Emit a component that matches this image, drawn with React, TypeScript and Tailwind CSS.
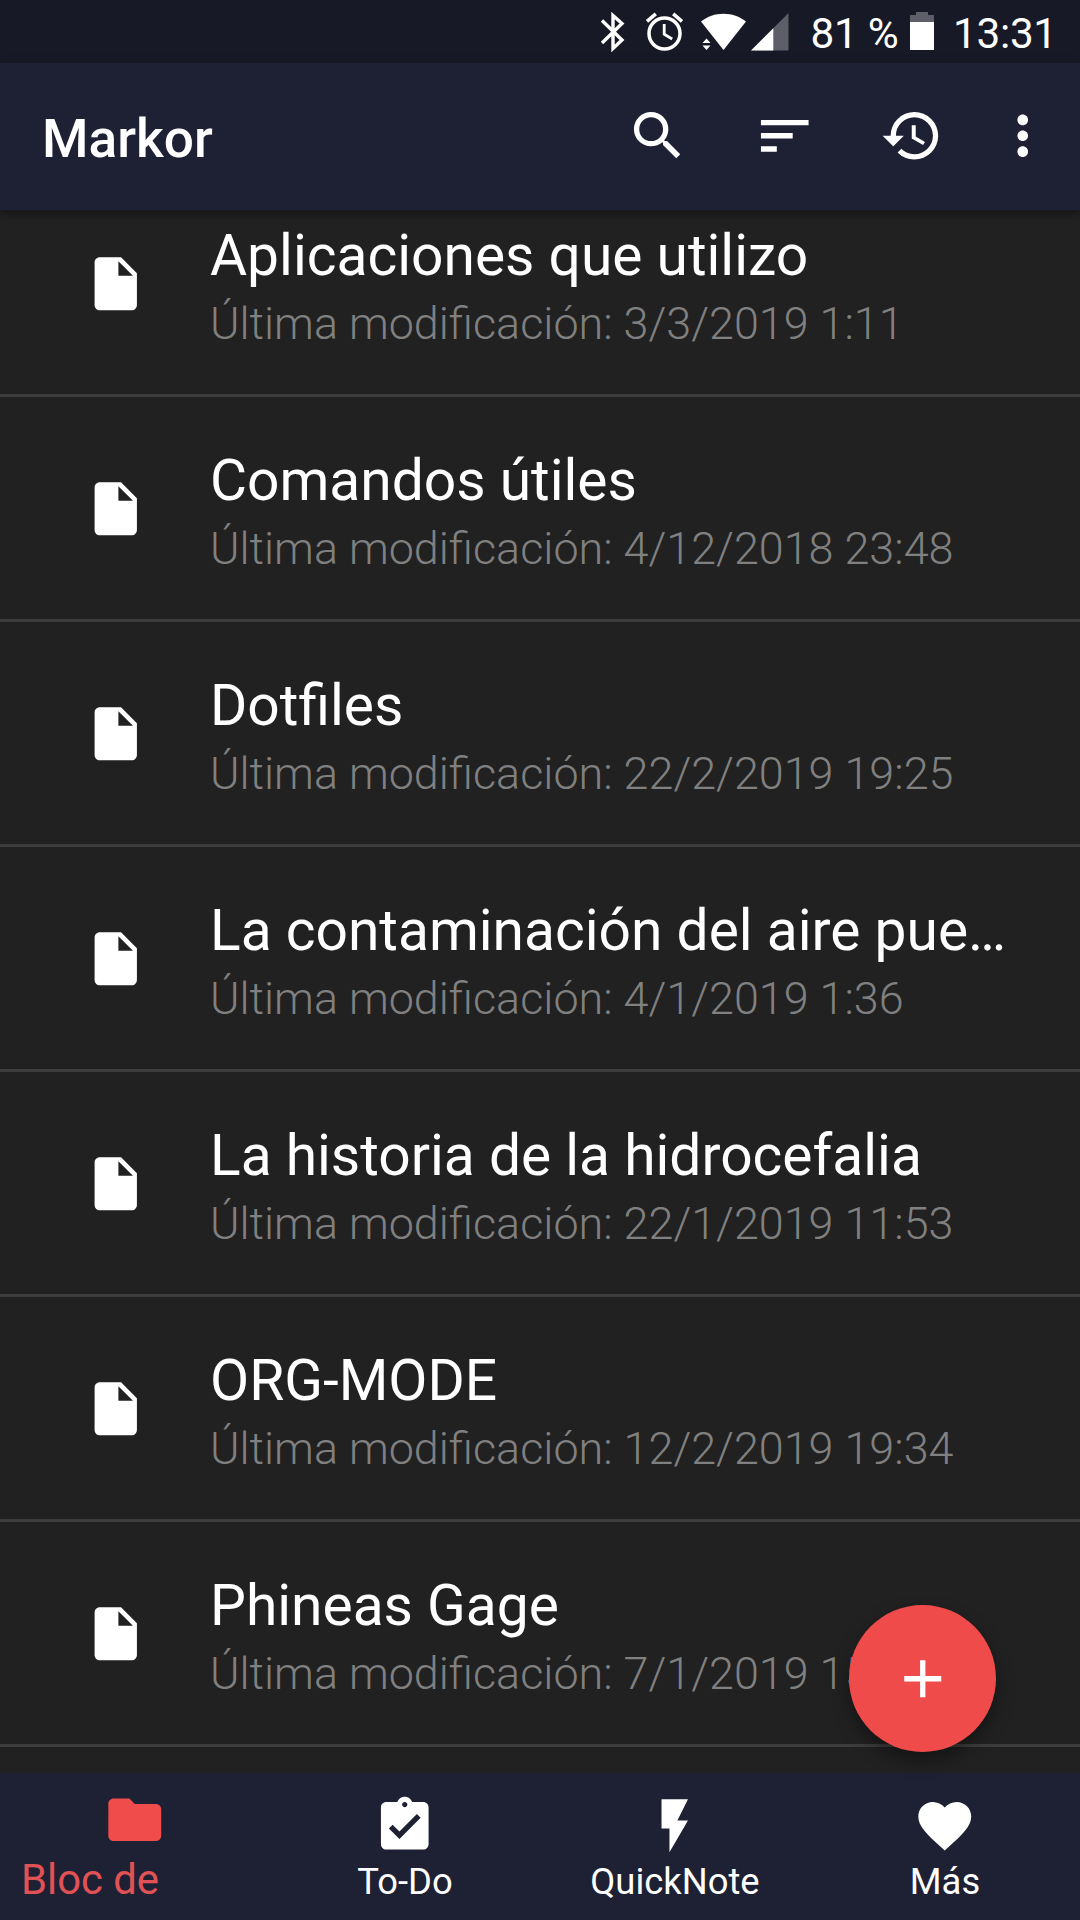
import React from "react";
import {
  MdAdd,
  MdAssignmentTurnedIn,
  MdFavorite,
  MdFlashOn,
  MdFolder,
  MdHistory,
  MdInsertDriveFile,
  MdMoreVert,
  MdSearch,
  MdSort,
} from "react-icons/md";
import clsx from "clsx";

const notes = [
  { title: "Aplicaciones que utilizo", modified: "3/3/2019 1:11" },
  { title: "Comandos útiles", modified: "4/12/2018 23:48" },
  { title: "Dotfiles", modified: "22/2/2019 19:25" },
  { title: "La contaminación del aire pue…", modified: "4/1/2019 1:36" },
  { title: "La historia de la hidrocefalia", modified: "22/1/2019 11:53" },
  { title: "ORG-MODE", modified: "12/2/2019 19:34" },
  { title: "Phineas Gage", modified: "7/1/2019 15:52" },
];

const tabs = [
  { label: "Bloc de", icon: MdFolder, active: true },
  { label: "To-Do", icon: MdAssignmentTurnedIn, active: false },
  { label: "QuickNote", icon: MdFlashOn, active: false },
  { label: "Más", icon: MdFavorite, active: false },
];

const StatusBar = () => (
  <div className="flex h-[63px] shrink-0 items-start bg-[#171926] pl-[600px]">
    {/* Bluetooth */}
    <svg className="mt-3 h-10 w-[25px] shrink-0" viewBox="0 0 25 40" fill="none">
      <path
        d="M2 8.500L22 28L13 36.500V3.500L22 11.500L2 31"
        stroke="#fff"
        strokeWidth="3.400"
      />
    </svg>
    {/* Alarm */}
    <svg className="mt-3 ml-5 h-10 w-10 shrink-0" viewBox="0 0 40 40" fill="none" stroke="#fff">
      <circle cx="19.500" cy="21.500" r="15.500" strokeWidth="3.500" />
      <path d="M19.200 12v10.200l8 4.800" strokeWidth="2.800" />
      <path d="M2 9.300l8.800-7.400M37 9.300l-8.800-7.400" strokeWidth="3.600" />
    </svg>
    {/* Wifi */}
    <svg className="mt-3 ml-4 h-10 w-[46px] shrink-0" viewBox="0 0 46 40" fill="#fff">
      <path d="M0 9.500C6.500 4.500 14 1.800 22.500 1.800S38.500 4.500 45 9.500L22.500 38z" />
      <path d="M1.500 31h8L5.500 26.500zM1.500 33.500h8L5.500 38z" />
    </svg>
    {/* Signal */}
    <svg className="mt-3 ml-1 h-10 w-[38px] shrink-0" viewBox="0 0 38 40">
      <path d="M0 38.600L37.500 1V38.600z" fill="#5d5e68" />
      <path d="M0 38.600L22.300 16.200V38.600z" fill="#fff" />
    </svg>
    <span className="mt-[9px] ml-[21.5px] w-[99.5px] shrink-0 text-[42.3px] leading-[50px] tracking-[-0.3px] whitespace-nowrap text-white">
      81 %
    </span>
    {/* Battery */}
    <svg className="mt-3 h-10 w-6 shrink-0" viewBox="0 0 24 40">
      <path d="M0 3H6V0H18V3H24V10H0z" fill="#5d5e68" />
      <path d="M0 10H24V38H0z" fill="#fff" />
    </svg>
    <span className="mt-[9px] ml-[19px] text-[42.3px] leading-[50px] tracking-[-0.3px] text-white">
      13:31
    </span>
  </div>
);

const Toolbar = () => (
  <header className="relative z-10 flex h-[147px] shrink-0 items-center bg-[#1e2034] pr-[26px] pl-[42px] text-white shadow-[0_3px_10px_rgba(0,0,0,0.4)]">
    <h1 className="flex-1 pt-1 text-[53.2px] leading-[64px] font-medium">Markor</h1>
    <div className="flex items-center pb-[1px] text-[63.5px]">
      <MdSearch />
      <MdSort className="ml-[63.5px]" />
      <MdHistory className="ml-[63.5px]" />
      <MdMoreVert className="ml-[47px]" />
    </div>
  </header>
);

const NoteRow = ({ title, modified }: { title: string; modified: string }) => (
  <li className="flex h-[225px] shrink-0 border-b-3 border-[#3d3d3d] pl-[84px]">
    <MdInsertDriveFile className="mt-[79.500px] shrink-0 text-[63.5px] text-white" />
    <div className="ml-[62.5px] pt-[50px] whitespace-nowrap">
      <p className="text-[56.9px] leading-[68px] text-white">{title}</p>
      <p className="mt-[7px] text-[44.88px] leading-[54px] font-light text-[#808080]">
        Última modificación: {modified}
      </p>
    </div>
  </li>
);

const BottomNav = () => (
  <nav className="grid h-[147px] shrink-0 grid-cols-4 bg-[#1e2034]">
    {tabs.map(({ label, icon: Icon, active }) => (
      <div
        key={label}
        className={clsx(
          "flex flex-col items-center",
          active ? "pt-[15px] text-[#f04c4b]" : "pt-[21px] text-white",
        )}
      >
        <Icon className="shrink-0 text-[63.5px]" />
        <span
          className={clsx(
            "leading-[44px] whitespace-nowrap",
            active
              ? "mt-[6px] w-full pl-[21px] text-[41.8px] text-[#e05254]"
              : "mt-[2px] text-[36.4px]",
          )}
        >
          {label}
        </span>
      </div>
    ))}
  </nav>
);

const App = () => {
  return (
    <div className="relative flex h-[1920px] w-[1080px] flex-col overflow-hidden bg-[#212121] font-[Roboto,sans-serif]">
      <StatusBar />
      <Toolbar />
      <main className="min-h-0 flex-1 overflow-hidden">
        {/* The list is scrolled a little past its first row */}
        <ul className="-mt-[38px] flex flex-col">
          {notes.map((note) => (
            <NoteRow key={note.title} {...note} />
          ))}
        </ul>
      </main>
      <BottomNav />
      <button className="absolute right-[84px] bottom-[168px] flex h-[147px] w-[147px] items-center justify-center rounded-full bg-[#ef4b4a] text-[63.5px] text-white shadow-[0_8px_18px_rgba(0,0,0,0.4)]">
        <MdAdd />
      </button>
    </div>
  );
};

export default App;
